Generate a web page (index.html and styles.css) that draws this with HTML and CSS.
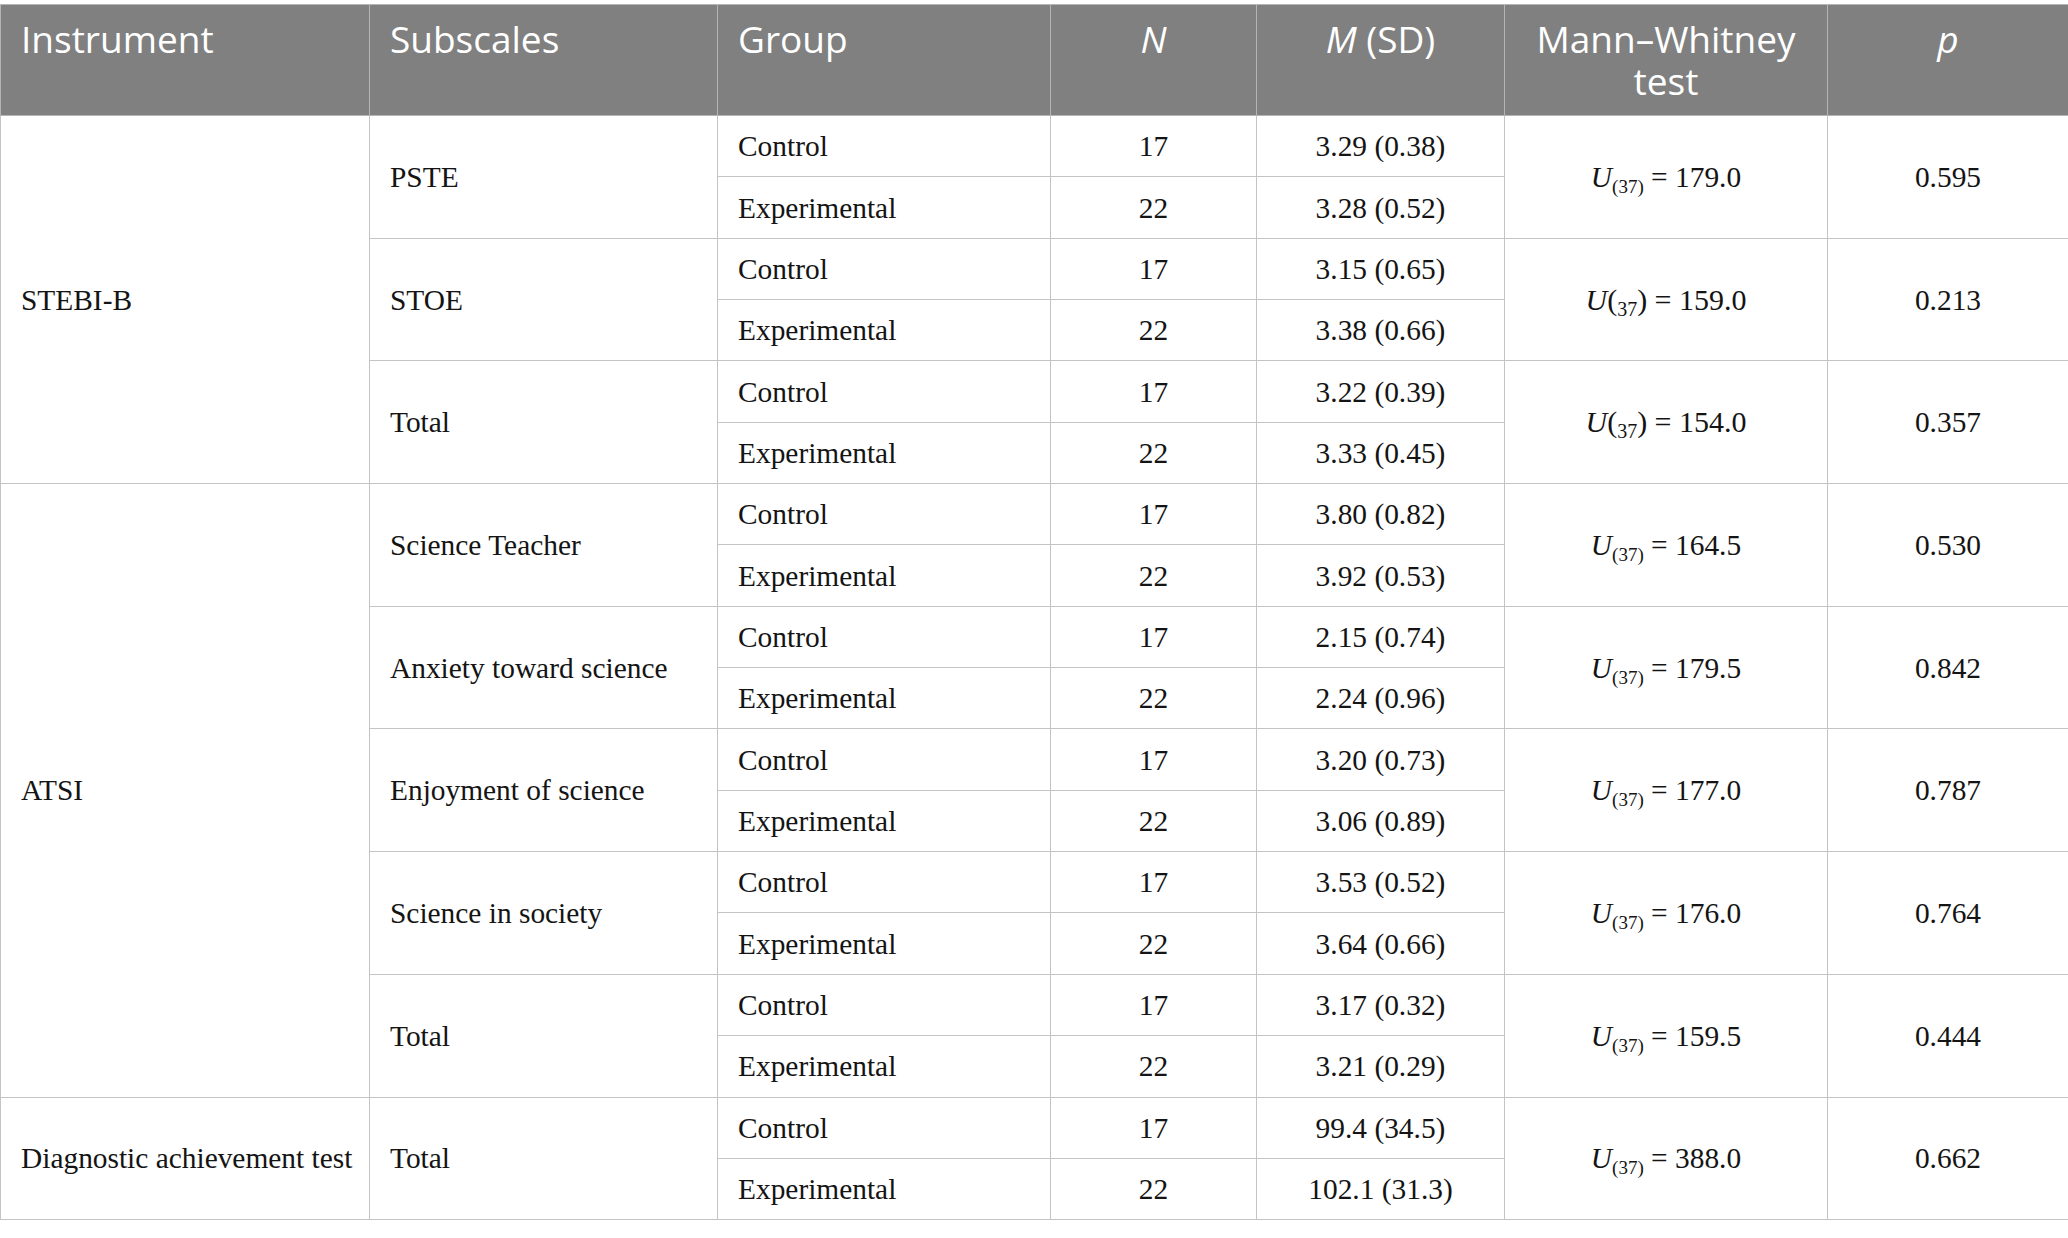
FILE: index.html
```html
<!DOCTYPE html>
<html>
<head>
<meta charset="utf-8">
<link rel="stylesheet" href="styles.css">
</head>
<body>
<table class="data">
<colgroup>
<col class="c1"><col class="c2"><col class="c3"><col class="c4"><col class="c5"><col class="c6"><col class="c7">
</colgroup>
<thead>
<tr>
<th class="left">Instrument</th>
<th class="left">Subscales</th>
<th class="left">Group</th>
<th><i>N</i></th>
<th><i>M</i> (SD)</th>
<th>Mann–Whitney test</th>
<th><i>p</i></th>
</tr>
</thead>
<tbody>
<tr><td rowspan="6" class="left">STEBI-B</td><td rowspan="2" class="left">PSTE</td><td class="left">Control</td><td>17</td><td>3.29 (0.38)</td><td rowspan="2"><i>U</i><sub>(37)</sub> = 179.0</td><td rowspan="2">0.595</td></tr>
<tr><td class="left">Experimental</td><td>22</td><td>3.28 (0.52)</td></tr>
<tr><td rowspan="2" class="left">STOE</td><td class="left">Control</td><td>17</td><td>3.15 (0.65)</td><td rowspan="2" class="alt"><i>U</i>(<sub>37</sub>) = 159.0</td><td rowspan="2">0.213</td></tr>
<tr><td class="left">Experimental</td><td>22</td><td>3.38 (0.66)</td></tr>
<tr><td rowspan="2" class="left">Total</td><td class="left">Control</td><td>17</td><td>3.22 (0.39)</td><td rowspan="2" class="alt"><i>U</i>(<sub>37</sub>) = 154.0</td><td rowspan="2">0.357</td></tr>
<tr><td class="left">Experimental</td><td>22</td><td>3.33 (0.45)</td></tr>

<tr><td rowspan="10" class="left">ATSI</td><td rowspan="2" class="left">Science Teacher</td><td class="left">Control</td><td>17</td><td>3.80 (0.82)</td><td rowspan="2"><i>U</i><sub>(37)</sub> = 164.5</td><td rowspan="2">0.530</td></tr>
<tr><td class="left">Experimental</td><td>22</td><td>3.92 (0.53)</td></tr>
<tr><td rowspan="2" class="left">Anxiety toward science</td><td class="left">Control</td><td>17</td><td>2.15 (0.74)</td><td rowspan="2"><i>U</i><sub>(37)</sub> = 179.5</td><td rowspan="2">0.842</td></tr>
<tr><td class="left">Experimental</td><td>22</td><td>2.24 (0.96)</td></tr>
<tr><td rowspan="2" class="left">Enjoyment of science</td><td class="left">Control</td><td>17</td><td>3.20 (0.73)</td><td rowspan="2"><i>U</i><sub>(37)</sub> = 177.0</td><td rowspan="2">0.787</td></tr>
<tr><td class="left">Experimental</td><td>22</td><td>3.06 (0.89)</td></tr>
<tr><td rowspan="2" class="left">Science in society</td><td class="left">Control</td><td>17</td><td>3.53 (0.52)</td><td rowspan="2"><i>U</i><sub>(37)</sub> = 176.0</td><td rowspan="2">0.764</td></tr>
<tr><td class="left">Experimental</td><td>22</td><td>3.64 (0.66)</td></tr>
<tr><td rowspan="2" class="left">Total</td><td class="left">Control</td><td>17</td><td>3.17 (0.32)</td><td rowspan="2"><i>U</i><sub>(37)</sub> = 159.5</td><td rowspan="2">0.444</td></tr>
<tr><td class="left">Experimental</td><td>22</td><td>3.21 (0.29)</td></tr>

<tr><td rowspan="2" class="left">Diagnostic achievement test</td><td rowspan="2" class="left">Total</td><td class="left">Control</td><td>17</td><td>99.4 (34.5)</td><td rowspan="2"><i>U</i><sub>(37)</sub> = 388.0</td><td rowspan="2">0.662</td></tr>
<tr><td class="left">Experimental</td><td>22</td><td>102.1 (31.3)</td></tr>
</tbody>
</table>
</body>
</html>
```
FILE: styles.css
```css
html, body {
  margin: 0;
  padding: 0;
  background: #ffffff;
}
body {
  padding-top: 4px;
}
.data {
  width: 2068px;
  table-layout: fixed;
  border-collapse: collapse;
  font-family: "Liberation Serif", "Times New Roman", serif;
  color: #141414;
}
.c1 { width: 369px; }
.c2 { width: 348px; }
.c3 { width: 333px; }
.c4 { width: 206px; }
.c5 { width: 248px; }
.c6 { width: 323px; }
.c7 { width: 241px; }

.data th {
  background: #7f807f;
  color: #ffffff;
  font-family: "Open Sans", "Noto Sans", sans-serif;
  font-weight: 400;
  font-size: 37px;
  line-height: 42px;
  height: 111px;
  vertical-align: top;
  text-align: center;
  padding: 13px 20px 0 20px;
  border: 1px solid #b5b5b5;
  box-sizing: border-box;
}
.data th.left { text-align: left; }
.data td {
  font-size: 29.4px;
  height: 61.35px;
  padding: 0 20px;
  text-align: center;
  vertical-align: middle;
  border: 1px solid #c4c4c4;
  box-sizing: border-box;
  line-height: 34px;
}
.data td.left {
  text-align: left;
  padding-right: 8px;
  white-space: nowrap;
}
.data sub {
  font-size: 19px;
  vertical-align: -6px;
  line-height: 0;
}
.data td.alt {
  font-size: 30px;
}
.data td.alt sub {
  font-size: 20px;
  vertical-align: -6px;
}
```
